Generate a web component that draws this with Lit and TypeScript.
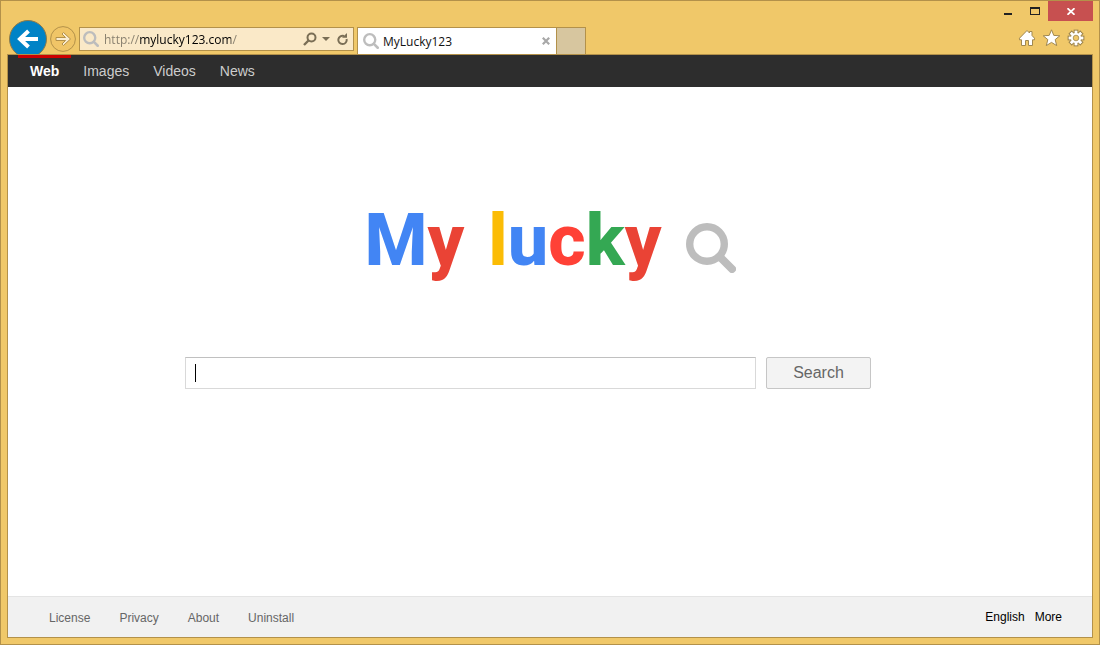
import { LitElement, html, css, svg } from "lit";
import { customElement, state } from "lit/decorators.js";

const magnifier = () => html`<svg class="magnifier" viewBox="0 0 50 50" aria-hidden="true">
  <circle cx="21" cy="21" r="17.3" fill="none" stroke="#bdbdbd" stroke-width="7.4" />
  <path d="M34 34L46 46" stroke="#bdbdbd" stroke-width="8" stroke-linecap="round" />
</svg>`;

const gearTeeth = [0, 45, 90, 135, 180, 225, 270, 315];

@customElement("browser-chrome")
export class BrowserChrome extends LitElement {
  static styles = css`
    :host {
      display: flex;
      justify-content: space-between;
      height: 53px;
      overflow: hidden;
      font-family: "Open Sans", "Noto Sans", sans-serif;
      font-size: 12px;
    }
    button {
      border: 0;
      padding: 0;
      background: none;
      font: inherit;
      display: grid;
      place-items: center;
    }
    svg {
      display: block;
    }
    .toolbar {
      display: flex;
      align-items: flex-start;
      flex: 0 1 577px;
      min-width: 0;
      padding: 19px 0 0 2px;
    }
    .back {
      flex: none;
    }
    .forward {
      flex: none;
      margin: 6px 3px 0;
    }
    .address {
      box-sizing: border-box;
      flex: 1 1 275px;
      min-width: 0;
      height: 24px;
      margin: 7px 3px 0 0;
      padding: 0 4px 0 3px;
      border: 1px solid #b3914a;
      background: #fae9c8;
      display: flex;
      align-items: center;
    }
    .magnifier {
      width: 16px;
      height: 16px;
      flex: none;
    }
    .url {
      flex: 1;
      min-width: 0;
      border: 0;
      outline: 0;
      padding: 0;
      margin-left: 5px;
      height: 20px;
      font: inherit;
      color: transparent;
      background: linear-gradient(90deg, #857d6c 35px, #000 35px, #000 127px, #857d6c 127px);
      -webkit-background-clip: text;
      background-clip: text;
    }
    .tools {
      display: flex;
      align-items: center;
      gap: 5px;
    }
    .tab {
      box-sizing: border-box;
      flex: 0 1 200px;
      min-width: 0;
      height: 27px;
      margin-top: 7px;
      padding: 0 6px 0 5px;
      border: 1px solid #b3914a;
      border-bottom: 0;
      background: #fff;
      display: flex;
      align-items: center;
      color: #111;
    }
    .title {
      flex: 1;
      margin-left: 4px;
    }
    .new-tab {
      box-sizing: border-box;
      flex: 0 0 29px;
      height: 27px;
      margin-top: 7px;
      border: 1px solid #b3914a;
      border-width: 1px 1px 0 0;
      background: #d7c69f;
    }
    .side {
      display: flex;
      flex-direction: column;
      align-items: flex-end;
      flex: none;
    }
    .controls {
      display: flex;
      height: 20px;
    }
    .control {
      width: 27px;
    }
    .close {
      width: 45px;
      background: #c75050;
    }
    .actions {
      display: flex;
      gap: 7px;
      padding: 8px 8px 0 0;
    }
  `;

  render() {
    return html`
      <div class="toolbar">
        <button class="back" aria-label="Back">
          <svg width="38" height="38" viewBox="0 0 38 38">
            <circle cx="19" cy="19" r="18.5" fill="#0083c6" stroke="#8d7a49" />
            <path d="M29 19H12M19.5 11L11 19L19.5 27" fill="none" stroke="#fff" stroke-width="4" />
          </svg>
        </button>
        <button class="forward" aria-label="Forward">
          <svg width="26" height="26" viewBox="0 0 26 26">
            <circle cx="13" cy="13" r="12.4" fill="#f0c567" stroke="#b3914a" />
            <path
              d="M6 11.5H15.5L12 8L13.5 6.5L20.5 13L13.5 19.5L12 18L15.5 14.5H6Z"
              fill="#faecd0"
              stroke="#b3914a"
              stroke-width="1"
            />
          </svg>
        </button>
        <div class="address">
          ${magnifier()}
          <input class="url" type="text" aria-label="Address" .value=${"http://mylucky123.com/"} />
          <div class="tools">
            <button aria-label="Search the web">
              <svg width="14" height="14" viewBox="0 0 14 14" fill="none" stroke="#7a6e55" stroke-width="2">
                <circle cx="8.5" cy="5.5" r="4" />
                <path d="M5.5 8.5L1 13" stroke-width="2.4" />
              </svg>
            </button>
            <button aria-label="Address history">
              <svg width="8" height="4" viewBox="0 0 8 4"><path d="M0 0H8L4 4Z" fill="#7a6e55" /></svg>
            </button>
            <button aria-label="Refresh">
              <svg width="14" height="14" viewBox="0 0 14 14">
                <path d="M9 4A4.2 4.2 0 1 0 11.6 7" fill="none" stroke="#7a6e55" stroke-width="2" />
                <path d="M7 5.8H12V1Z" fill="#7a6e55" />
              </svg>
            </button>
          </div>
        </div>
        <div class="tab">
          ${magnifier()}
          <span class="title">MyLucky123</span>
          <button aria-label="Close tab">
            <svg width="8" height="8" viewBox="0 0 8 8">
              <path d="M.8 .8L7.2 7.2M7.2 .8L.8 7.2" stroke="#a8a8a8" stroke-width="2.2" />
            </svg>
          </button>
        </div>
        <button class="new-tab" aria-label="New tab"></button>
      </div>
      <div class="side">
        <div class="controls">
          <button class="control" aria-label="Minimize">
            <svg width="27" height="20" viewBox="0 0 27 20"><path d="M10 12H18V14H10Z" fill="#222" /></svg>
          </button>
          <button class="control" aria-label="Maximize">
            <svg width="27" height="20" viewBox="0 0 27 20">
              <path d="M9 6H19V14H9ZM10 8V13H18V8Z" fill="#222" fill-rule="evenodd" />
            </svg>
          </button>
          <button class="close" aria-label="Close">
            <svg width="8" height="7" viewBox="0 0 8 7">
              <path d="M.5 .2L7.5 6.8M7.5 .2L.5 6.8" stroke="#fff" stroke-width="1.7" />
            </svg>
          </button>
        </div>
        <div class="actions">
          <button aria-label="Home">
            <svg width="18" height="18" viewBox="0 0 18 18">
              <path
                d="M10 1.5L12.5 4V2.5H15V6.5L17.5 9.2V10.8H15.5V16.5H11.5V11.5H8.5V16.5H4.5V10.8H2.5V9.2Z"
                fill="#fff" stroke="#a08850" stroke-width="1"
              />
            </svg>
          </button>
          <button aria-label="Favorites">
            <svg width="18" height="18" viewBox="0 0 18 18">
              <path
                d="M9.5 .8L11.8 6.4L17.8 6.8L13.2 10.6L14.7 16.6L9.5 13.4L4.3 16.6L5.8 10.6L1.2 6.8L7.2 6.4Z"
                fill="#fff" stroke="#a08850" stroke-width="1"
              />
            </svg>
          </button>
          <button aria-label="Tools">
            <svg width="18" height="18" viewBox="0 0 18 18">
              ${gearTeeth.map((a) => svg`<rect x="7.2" y="1.2" width="3.6" height="5" fill="#fff" stroke="#a08850" stroke-width="1.2" transform="rotate(${a} 9 9)" />`)}
              <circle cx="9" cy="9" r="5.6" fill="#fff" stroke="#a08850" />
              ${gearTeeth.map((a) => svg`<rect x="7.7" y="1.8" width="2.6" height="4" fill="#fff" transform="rotate(${a} 9 9)" />`)}
              <circle cx="9" cy="9" r="2.8" fill="#f0c869" stroke="#a08850" stroke-width=".8" />
            </svg>
          </button>
        </div>
      </div>
    `;
  }
}

@customElement("search-page")
export class SearchPage extends LitElement {
  static styles = css`
    :host {
      flex: 1;
      display: flex;
      flex-direction: column;
      border: 1px solid #b3914a;
      background: #fff;
      font-family: "Liberation Sans", Arial, sans-serif;
    }
    a {
      color: inherit;
      text-decoration: none;
    }
    .nav {
      display: flex;
      height: 32px;
      padding: 0 10px;
      background: #2d2d2d;
      color: #ccc;
      font-size: 14px;
      line-height: 32px;
    }
    .nav-link {
      padding: 0 12px;
    }
    .current {
      color: #fff;
      font-weight: bold;
      box-shadow: inset 0 3px #c00;
    }
    .main {
      flex: 1;
      padding: 112px 20px 40px;
    }
    .logo {
      display: flex;
      justify-content: center;
      gap: 24px;
      margin: 0 0 74px;
      font: 800 72px/84px Roboto, sans-serif;
    }
    .magnifier {
      width: 50px;
      height: 50px;
      margin-top: 24px;
    }
    .blue {
      color: #4285f4;
    }
    .red {
      color: #ea4335;
    }
    .yellow {
      color: #fbbc05;
    }
    .coral {
      color: #ff4136;
    }
    .green {
      color: #34a853;
    }
    .search {
      display: flex;
      gap: 10px;
      max-width: 686px;
      margin: 0 auto;
      padding-right: 44px;
    }
    .query {
      box-sizing: border-box;
      flex: 1;
      min-width: 0;
      height: 32px;
      padding: 0 9px;
      border: 1px solid #d9d9d9;
      border-top-color: #c0c0c0;
      outline: 0;
      font: 16px "Liberation Sans", Arial, sans-serif;
      background: #fff;
    }
    .query:placeholder-shown {
      caret-color: transparent;
      background: linear-gradient(#000, #000) 9px 6px / 1px 18px no-repeat #fff;
    }
    .submit {
      box-sizing: border-box;
      width: 105px;
      height: 32px;
      padding: 0;
      border: 1px solid #c6c6c6;
      border-radius: 2px;
      background: #f3f3f3;
      color: #666;
      font: 16px "Liberation Sans", Arial, sans-serif;
    }
    .footer {
      display: flex;
      justify-content: space-between;
      padding: 2px 30px 0 41px;
      border-top: 1px solid #e4e4e4;
      background: #f1f1f1;
      font-size: 12px;
      line-height: 38px;
    }
    .about {
      display: flex;
      gap: 29px;
      color: #666;
    }
    .language {
      display: flex;
      gap: 10px;
      color: #000;
      line-height: 36px;
    }
  `;

  @state() private active = "Web";

  render() {
    return html`
      <nav class="nav">
        ${["Web", "Images", "Videos", "News"].map(
          (name) => html`<a
            class="nav-link ${name === this.active ? "current" : ""}"
            href="#"
            @click=${() => (this.active = name)}
            >${name}</a
          >`
        )}
      </nav>
      <main class="main">
        <h1 class="logo">
          <span><span class="blue">M</span><span class="red">y</span></span>
          <span
            ><span class="yellow">l</span><span class="blue">u</span><span class="coral">c</span
            ><span class="green">k</span><span class="red">y</span></span
          >
          ${magnifier()}
        </h1>
        <form class="search" @submit=${(e: Event) => e.preventDefault()}>
          <input class="query" type="text" placeholder=" " aria-label="Search" />
          <button class="submit">Search</button>
        </form>
      </main>
      <footer class="footer">
        <div class="about">
          ${["License", "Privacy", "About", "Uninstall"].map((name) => html`<a href="#">${name}</a>`)}
        </div>
        <div class="language">
          <a href="#">English</a>
          <a href="#">More</a>
        </div>
      </footer>
    `;
  }
}

@customElement("app-root")
export class AppRoot extends LitElement {
  static styles = css`
    :host {
      box-sizing: border-box;
      display: flex;
      flex-direction: column;
      min-height: 100vh;
      padding: 0 6px 6px;
      border: 1px solid #b3914a;
      background: #f0c869;
    }
  `;

  render() {
    return html`
      <browser-chrome></browser-chrome>
      <search-page></search-page>
    `;
  }
}
